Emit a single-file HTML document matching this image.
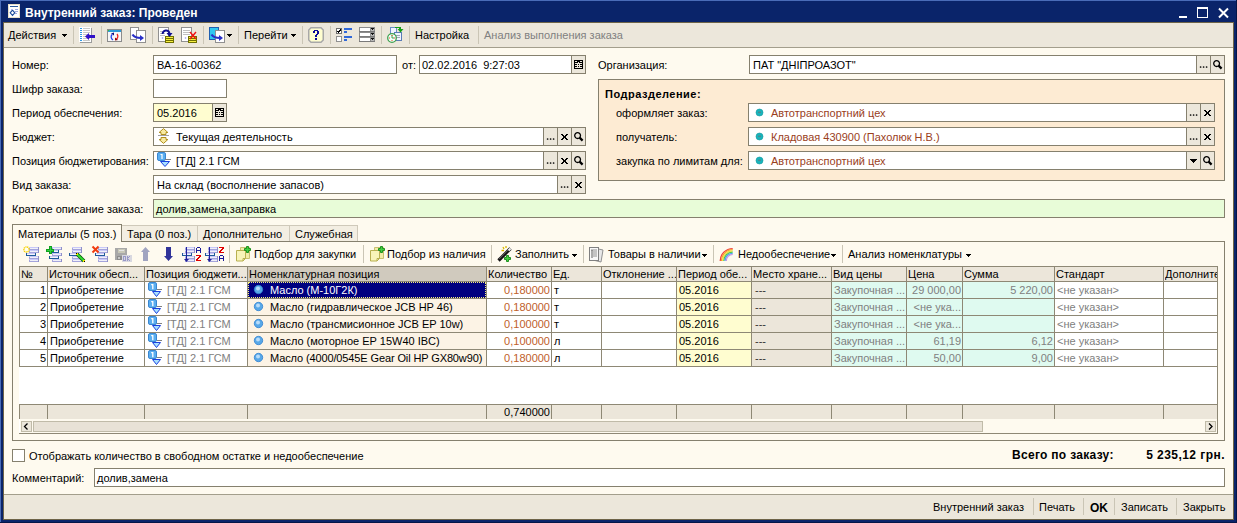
<!DOCTYPE html><html><head><meta charset="utf-8"><style>
html,body{margin:0;padding:0;width:1237px;height:523px;overflow:hidden;position:relative;background:#0A246A}
.a{position:absolute}
.t{position:absolute;font-family:"Liberation Sans",sans-serif;font-size:11px;line-height:13px;white-space:nowrap}
svg.a{overflow:visible}
</style></head><body>
<div class="a" style="left:0px;top:0px;width:1237px;height:523px;background:#0A246A;"></div>
<div class="a" style="left:0px;top:0px;width:1237px;height:1px;background:#4A6CB8;"></div>
<div class="a" style="left:0px;top:0px;width:1px;height:523px;background:#4A6CB8;"></div>
<svg class="a" style="left:8px;top:4px" width="12" height="14" viewBox="0 0 12 14"><rect x="0" y="0" width="12" height="14" fill="#E8E0C8"/><rect x="1" y="1" width="10" height="12" fill="#FFFFFF"/><rect x="2" y="2" width="8" height="1" fill="#2A5A9A"/><path d="M4.5 6.2L6.8 8.8 4.5 11.4 2.2 8.8z" fill="none" stroke="#1A4A9A" stroke-width="1.1"/><rect x="7" y="5" width="3" height="1" fill="#9AA8E0"/><rect x="7" y="7" width="3" height="1" fill="#9AA8E0"/><rect x="7" y="9" width="2" height="1" fill="#9AA8E0"/><rect x="3" y="5" width="2" height="1" fill="#B0B8F0"/></svg>
<div class="t" style="left:25px;top:7px;color:#fff;font-weight:bold;font-size:12px;">Внутренний заказ: Проведен</div>
<div class="a" style="left:1179px;top:16px;width:8px;height:2px;background:#fff;"></div>
<div class="a" style="left:1197px;top:7px;width:11px;height:11px;border:1px solid #fff;box-sizing:border-box;border-top-width:2px;"></div>
<svg class="a" style="left:1218px;top:8px" width="11" height="10" viewBox="0 0 11 10"><path d="M1 0.5L10 9.5M10 0.5L1 9.5" stroke="#fff" stroke-width="2"/></svg>
<div class="a" style="left:3px;top:22px;width:1231px;height:1px;background:#6E6448;"></div>
<div class="a" style="left:3px;top:22px;width:1px;height:498px;background:#6E6448;"></div>
<div class="a" style="left:1233px;top:22px;width:1px;height:498px;background:#6E6448;"></div>
<div class="a" style="left:4px;top:23px;width:1229px;height:24px;background:#ECE7DB;"></div>
<div class="a" style="left:4px;top:47px;width:1229px;height:1px;background:#A39E8C;"></div>
<div class="a" style="left:4px;top:48px;width:1229px;height:446px;background:#FEFAEF;"></div>
<div class="a" style="left:4px;top:494px;width:1229px;height:1px;background:#A39E8C;"></div>
<div class="a" style="left:4px;top:495px;width:1229px;height:24px;background:#ECE7DB;"></div>
<div class="a" style="left:3px;top:519px;width:1231px;height:1px;background:#6E6448;"></div>
<div class="a" style="left:1236px;top:0px;width:1px;height:523px;background:#051648;"></div>
<div class="a" style="left:0px;top:522px;width:1237px;height:1px;background:#051648;"></div>
<div class="t" style="left:8px;top:29px;color:#000;">Действия</div>
<svg class="a" style="left:62px;top:34px" width="5" height="3" viewBox="0 0 5 3" shape-rendering="crispEdges"><rect x="0" y="0" width="5" height="1" fill="#000"/><rect x="1" y="1" width="3" height="1" fill="#000"/><rect x="2" y="2" width="1" height="1" fill="#000"/></svg>
<div class="a" style="left:73px;top:26px;width:1px;height:18px;background:#CAC5B5;"></div>
<svg class="a" style="left:79px;top:27px" width="17" height="17" viewBox="0 0 17 17"><rect x="1" y="1" width="12" height="15" fill="#9C9C9C"/><rect x="0" y="0" width="12" height="15" fill="#FFFFFF"/><rect x="1" y="1" width="2" height="1" fill="#2D9AE8"/><rect x="4" y="1" width="7" height="1" fill="#C8C8C8"/><rect x="1" y="3" width="2" height="1" fill="#2D9AE8"/><rect x="4" y="3" width="7" height="1" fill="#C8C8C8"/><rect x="1" y="5" width="2" height="1" fill="#2D9AE8"/><rect x="4" y="5" width="7" height="1" fill="#C8C8C8"/><rect x="1" y="7" width="2" height="1" fill="#2D9AE8"/><rect x="4" y="7" width="7" height="1" fill="#C8C8C8"/><rect x="1" y="9" width="2" height="1" fill="#2D9AE8"/><rect x="4" y="9" width="7" height="1" fill="#C8C8C8"/><rect x="1" y="11" width="2" height="1" fill="#2D9AE8"/><rect x="4" y="11" width="7" height="1" fill="#C8C8C8"/><rect x="1" y="13" width="2" height="1" fill="#2D9AE8"/><rect x="4" y="13" width="7" height="1" fill="#C8C8C8"/><path d="M6 9.5L10 6v2h6v3h-6v2z" fill="#3010C8"/></svg>
<div class="a" style="left:101px;top:26px;width:1px;height:18px;background:#CAC5B5;"></div>
<svg class="a" style="left:107px;top:29px" width="15" height="13" viewBox="0 0 15 13"><rect x="0" y="0" width="15" height="13" fill="#8C8C8C"/><rect x="1" y="1" width="13" height="11" fill="#F6F6F6"/><rect x="1" y="1" width="13" height="2" fill="#2D9AD8"/><rect x="1" y="1" width="1" height="1" fill="#30D030"/><path d="M5 5.5a3.6 3.6 0 0 0 1 5.5" stroke="#2040F0" stroke-width="1.3" fill="none"/><path d="M4 4.5l3-1v3z" fill="#101080"/><path d="M10 5a3.6 3.6 0 0 1 -1 5.5" stroke="#F02020" stroke-width="1.3" fill="none"/><path d="M11 11l-3 0.5v-3z" fill="#900000"/></svg>
<svg class="a" style="left:130px;top:27px" width="17" height="17" viewBox="0 0 17 17"><rect x="0" y="0" width="9" height="13" fill="#909090"/><rect x="1" y="1" width="7" height="11" fill="#fff"/><rect x="6" y="3" width="10" height="13" fill="#909090"/><rect x="7" y="4" width="8" height="11" fill="#fff"/><path d="M2.5 7.5C4 10 8 11 11 11" stroke="#2A30C8" stroke-width="2.2" fill="none"/><path d="M10 8l4 3-4 3z" fill="#2A30C8"/></svg>
<div class="a" style="left:152px;top:26px;width:1px;height:18px;background:#CAC5B5;"></div>
<svg class="a" style="left:158px;top:27px" width="17" height="17" viewBox="0 0 17 17"><rect x="0" y="0" width="11" height="15" fill="#909090"/><rect x="1" y="1" width="9" height="13" fill="#fff"/><rect x="2" y="4" width="5" height="1" fill="#C0C0C0"/><rect x="2" y="6" width="5" height="1" fill="#C0C0C0"/><rect x="2" y="8" width="5" height="1" fill="#C0C0C0"/><path d="M3.5 11l1-1 1 1-1 1z" fill="#A0A0F0"/><rect x="7" y="9" width="9" height="7" fill="#707000"/><rect x="8" y="10" width="7" height="1" fill="#F8F040"/><rect x="8" y="12" width="7" height="1" fill="#F8F040"/><rect x="8" y="14" width="7" height="1" fill="#F8F040"/><path d="M4.5 7C5 3 10 2 11.5 6" stroke="#101090" stroke-width="2" fill="none"/><path d="M8.5 6h6l-3 4z" fill="#101090"/></svg>
<svg class="a" style="left:181px;top:27px" width="17" height="17" viewBox="0 0 17 17"><rect x="0" y="0" width="11" height="15" fill="#909090"/><rect x="1" y="1" width="9" height="13" fill="#fff"/><rect x="2" y="3" width="7" height="1" fill="#C0C0C0"/><rect x="2" y="5" width="7" height="1" fill="#C0C0C0"/><rect x="2" y="7" width="7" height="1" fill="#C0C0C0"/><path d="M3.5 11l1-1 1 1-1 1z" fill="#A0A0F0"/><rect x="7" y="9" width="9" height="7" fill="#707000"/><rect x="8" y="10" width="7" height="1" fill="#F8F040"/><rect x="8" y="12" width="7" height="1" fill="#F8F040"/><rect x="8" y="14" width="7" height="1" fill="#F8F040"/><path d="M9 5l6 7M15 5l-6 7" stroke="#F01010" stroke-width="1.4"/></svg>
<div class="a" style="left:203px;top:26px;width:1px;height:18px;background:#CAC5B5;"></div>
<svg class="a" style="left:209px;top:27px" width="17" height="17" viewBox="0 0 17 17"><rect x="0" y="0" width="10" height="13" fill="#2060B0"/><rect x="1" y="1" width="8" height="11" fill="#30C8F0"/><rect x="6" y="3" width="10" height="13" fill="#909090"/><rect x="7" y="4" width="8" height="11" fill="#fff"/><path d="M2.5 7.5C4 10 8 11 11 11" stroke="#2A30C8" stroke-width="2.2" fill="none"/><path d="M10 8l4 3-4 3z" fill="#2A30C8"/></svg>
<svg class="a" style="left:227px;top:34px" width="5" height="3" viewBox="0 0 5 3" shape-rendering="crispEdges"><rect x="0" y="0" width="5" height="1" fill="#000"/><rect x="1" y="1" width="3" height="1" fill="#000"/><rect x="2" y="2" width="1" height="1" fill="#000"/></svg>
<div class="a" style="left:238px;top:26px;width:1px;height:18px;background:#CAC5B5;"></div>
<div class="t" style="left:244px;top:29px;color:#000;">Перейти</div>
<svg class="a" style="left:291px;top:34px" width="5" height="3" viewBox="0 0 5 3" shape-rendering="crispEdges"><rect x="0" y="0" width="5" height="1" fill="#000"/><rect x="1" y="1" width="3" height="1" fill="#000"/><rect x="2" y="2" width="1" height="1" fill="#000"/></svg>
<div class="a" style="left:302px;top:26px;width:1px;height:18px;background:#CAC5B5;"></div>
<svg class="a" style="left:308px;top:27px" width="16" height="16" viewBox="0 0 16 16"><path d="M3 0.75h10l2.25 2.25v10l-2.25 2.25h-10l-2.25-2.25v-10z" fill="#FFFED0" stroke="#A8A8A8" stroke-width="1.5"/><rect x="6" y="3" width="1" height="1" fill="#0A0A9A"/><rect x="7" y="3" width="1" height="1" fill="#0A0A9A"/><rect x="8" y="3" width="1" height="1" fill="#0A0A9A"/><rect x="9" y="3" width="1" height="1" fill="#0A0A9A"/><rect x="5" y="4" width="1" height="1" fill="#0A0A9A"/><rect x="6" y="4" width="1" height="1" fill="#0A0A9A"/><rect x="9" y="4" width="1" height="1" fill="#0A0A9A"/><rect x="10" y="4" width="1" height="1" fill="#0A0A9A"/><rect x="5" y="5" width="1" height="1" fill="#0A0A9A"/><rect x="6" y="5" width="1" height="1" fill="#0A0A9A"/><rect x="9" y="5" width="1" height="1" fill="#0A0A9A"/><rect x="10" y="5" width="1" height="1" fill="#0A0A9A"/><rect x="9" y="6" width="1" height="1" fill="#0A0A9A"/><rect x="10" y="6" width="1" height="1" fill="#0A0A9A"/><rect x="8" y="7" width="1" height="1" fill="#0A0A9A"/><rect x="9" y="7" width="1" height="1" fill="#0A0A9A"/><rect x="7" y="8" width="1" height="1" fill="#0A0A9A"/><rect x="8" y="8" width="1" height="1" fill="#0A0A9A"/><rect x="7" y="9" width="1" height="1" fill="#0A0A9A"/><rect x="8" y="9" width="1" height="1" fill="#0A0A9A"/><rect x="7" y="11" width="1" height="1" fill="#0A0A9A"/><rect x="8" y="11" width="1" height="1" fill="#0A0A9A"/><rect x="7" y="12" width="1" height="1" fill="#0A0A9A"/><rect x="8" y="12" width="1" height="1" fill="#0A0A9A"/></svg>
<div class="a" style="left:330px;top:26px;width:1px;height:18px;background:#CAC5B5;"></div>
<svg class="a" style="left:336px;top:28px" width="16" height="14" viewBox="0 0 16 14" shape-rendering="crispEdges"><rect x="0" y="0" width="6" height="6" fill="#707070"/><rect x="1" y="1" width="4" height="4" fill="#fff"/><path d="M1.5 3l1.3 1.5L4.5 1.5" stroke="#000" stroke-width="1.2" fill="none"/><rect x="0" y="8" width="6" height="6" fill="#909090"/><rect x="1" y="9" width="4" height="4" fill="#fff"/><rect x="8" y="0" width="8" height="2" fill="#3068D8"/><rect x="8" y="3" width="3" height="2" fill="#3068D8"/><rect x="8" y="8" width="8" height="2" fill="#3068D8"/><rect x="8" y="11" width="3" height="2" fill="#3068D8"/></svg>
<svg class="a" style="left:359px;top:27px" width="16" height="15" viewBox="0 0 16 15" shape-rendering="crispEdges"><rect x="0" y="0" width="16" height="5" fill="#8C8C8C"/><rect x="1" y="1" width="10" height="3" fill="#FFFFFF"/><rect x="12" y="1" width="3" height="3" fill="#B8B8B8"/><rect x="12" y="1" width="3" height="1" fill="#101010"/><rect x="13" y="2" width="1" height="1" fill="#101010"/><rect x="0" y="4" width="16" height="1" fill="#7A7A7A"/><rect x="0" y="5" width="16" height="5" fill="#8C8C8C"/><rect x="1" y="6" width="10" height="3" fill="#FFFFFF"/><rect x="12" y="6" width="3" height="3" fill="#B8B8B8"/><rect x="12" y="6" width="3" height="1" fill="#101010"/><rect x="13" y="7" width="1" height="1" fill="#101010"/><rect x="0" y="9" width="16" height="1" fill="#7A7A7A"/><rect x="0" y="10" width="16" height="5" fill="#8C8C8C"/><rect x="1" y="11" width="10" height="3" fill="#FFFFFF"/><rect x="12" y="11" width="3" height="3" fill="#B8B8B8"/><rect x="12" y="11" width="3" height="1" fill="#101010"/><rect x="13" y="12" width="1" height="1" fill="#101010"/><rect x="0" y="14" width="16" height="1" fill="#7A7A7A"/></svg>
<div class="a" style="left:381px;top:26px;width:1px;height:18px;background:#CAC5B5;"></div>
<svg class="a" style="left:387px;top:26px" width="17" height="17" viewBox="0 0 17 17"><rect x="3.5" y="1.5" width="6" height="8" fill="#F0F4FF" stroke="#6A8CC8"/><rect x="7.5" y="6.5" width="7" height="8" fill="#F0F4FF" stroke="#5A7CB8"/><rect x="9" y="9" width="4" height="1" fill="#A0A8B8"/><rect x="9" y="11" width="4" height="1" fill="#A0A8B8"/><rect x="8" y="1" width="5" height="1" fill="#18A018"/><path d="M10.5 3h6l-3 3.5z" fill="#18A018"/><rect x="12" y="1" width="2" height="3" fill="#18A018"/><circle cx="5" cy="12" r="4.3" fill="#F4FFFA" stroke="#40A050" stroke-width="1.3"/><path d="M5 9v3h2" stroke="#40A050" fill="none"/><rect x="4.5" y="9" width="1" height="1" fill="#F05020"/><rect x="2" y="11.5" width="1" height="1" fill="#F05020"/><rect x="7" y="11.5" width="1" height="1" fill="#F05020"/><rect x="4.5" y="14" width="1" height="1" fill="#F05020"/></svg>
<div class="a" style="left:409px;top:26px;width:1px;height:18px;background:#CAC5B5;"></div>
<div class="t" style="left:415px;top:29px;color:#000;">Настройка</div>
<div class="a" style="left:478px;top:26px;width:1px;height:18px;background:#CAC5B5;"></div>
<div class="t" style="left:484px;top:29px;color:#808080;">Анализ выполнения заказа</div>
<div class="t" style="left:12px;top:59px;color:#000;">Номер:</div>
<div class="t" style="left:12px;top:83px;color:#000;">Шифр заказа:</div>
<div class="t" style="left:12px;top:107px;color:#000;">Период обеспечения:</div>
<div class="t" style="left:12px;top:131px;color:#000;">Бюджет:</div>
<div class="t" style="left:12px;top:155px;color:#000;">Позиция бюджетирования:</div>
<div class="t" style="left:12px;top:179px;color:#000;">Вид заказа:</div>
<div class="t" style="left:12px;top:203px;color:#000;">Краткое описание заказа:</div>
<div class="a" style="left:153px;top:55px;width:244px;height:19px;background:#fff;border:1px solid #85806E;box-sizing:border-box;"></div>
<div class="t" style="left:157px;top:59px;color:#000;">ВА-16-00362</div>
<div class="t" style="left:402px;top:59px;color:#000;">от:</div>
<div class="a" style="left:419px;top:55px;width:167px;height:19px;background:#fff;border:1px solid #85806E;box-sizing:border-box;"></div>
<div class="t" style="left:422px;top:59px;color:#000;">02.02.2016&nbsp; 9:27:03</div>
<div class="a" style="left:571px;top:55px;width:15px;height:19px;background:#ECE7DB;border:1px solid #85806E;box-sizing:border-box;"></div>
<svg class="a" style="left:574px;top:60px" width="9" height="9" viewBox="0 0 9 9" shape-rendering="crispEdges"><rect x="0" y="0" width="9" height="1" fill="#000"/><rect x="0" y="1" width="1" height="1" fill="#000"/><rect x="3" y="1" width="3" height="1" fill="#000"/><rect x="8" y="1" width="1" height="1" fill="#000"/><rect x="0" y="2" width="4" height="1" fill="#000"/><rect x="5" y="2" width="4" height="1" fill="#000"/><rect x="0" y="3" width="1" height="1" fill="#000"/><rect x="8" y="3" width="1" height="1" fill="#000"/><rect x="0" y="4" width="3" height="1" fill="#000"/><rect x="4" y="4" width="1" height="1" fill="#000"/><rect x="6" y="4" width="3" height="1" fill="#000"/><rect x="0" y="5" width="1" height="1" fill="#000"/><rect x="8" y="5" width="1" height="1" fill="#000"/><rect x="0" y="6" width="3" height="1" fill="#000"/><rect x="4" y="6" width="1" height="1" fill="#000"/><rect x="6" y="6" width="3" height="1" fill="#000"/><rect x="0" y="7" width="1" height="1" fill="#000"/><rect x="8" y="7" width="1" height="1" fill="#000"/><rect x="0" y="8" width="9" height="1" fill="#000"/></svg>
<div class="a" style="left:153px;top:79px;width:74px;height:19px;background:#fff;border:1px solid #85806E;box-sizing:border-box;"></div>
<div class="a" style="left:153px;top:103px;width:74px;height:19px;background:#FFFDD0;border:1px solid #85806E;box-sizing:border-box;"></div>
<div class="t" style="left:157px;top:107px;color:#000;">05.2016</div>
<div class="a" style="left:212px;top:103px;width:15px;height:19px;background:#ECE7DB;border:1px solid #85806E;box-sizing:border-box;"></div>
<svg class="a" style="left:215px;top:108px" width="9" height="9" viewBox="0 0 9 9" shape-rendering="crispEdges"><rect x="0" y="0" width="9" height="1" fill="#000"/><rect x="0" y="1" width="1" height="1" fill="#000"/><rect x="3" y="1" width="3" height="1" fill="#000"/><rect x="8" y="1" width="1" height="1" fill="#000"/><rect x="0" y="2" width="4" height="1" fill="#000"/><rect x="5" y="2" width="4" height="1" fill="#000"/><rect x="0" y="3" width="1" height="1" fill="#000"/><rect x="8" y="3" width="1" height="1" fill="#000"/><rect x="0" y="4" width="3" height="1" fill="#000"/><rect x="4" y="4" width="1" height="1" fill="#000"/><rect x="6" y="4" width="3" height="1" fill="#000"/><rect x="0" y="5" width="1" height="1" fill="#000"/><rect x="8" y="5" width="1" height="1" fill="#000"/><rect x="0" y="6" width="3" height="1" fill="#000"/><rect x="4" y="6" width="1" height="1" fill="#000"/><rect x="6" y="6" width="3" height="1" fill="#000"/><rect x="0" y="7" width="1" height="1" fill="#000"/><rect x="8" y="7" width="1" height="1" fill="#000"/><rect x="0" y="8" width="9" height="1" fill="#000"/></svg>
<div class="a" style="left:153px;top:127px;width:433px;height:19px;background:#fff;border:1px solid #85806E;box-sizing:border-box;"></div>
<svg class="a" style="left:158px;top:128px" width="12" height="17" viewBox="0 0 12 17"><path d="M5.5 0.6L9.9 4.5H8V6.5H3V4.5H1.1Z" fill="#F8EAA0" stroke="#B09020" stroke-linejoin="bevel"/><path d="M5.5 15.4L9.9 11.5H8V9.5H3V11.5H1.1Z" fill="#F8EAA0" stroke="#B09020" stroke-linejoin="bevel"/><rect x="0" y="7" width="11" height="1" fill="#A0A0A0"/></svg>
<div class="t" style="left:176px;top:131px;color:#000;">Текущая деятельность</div>
<div class="a" style="left:543px;top:127px;width:15px;height:19px;background:#ECE7DB;border:1px solid #85806E;box-sizing:border-box;"></div>
<svg class="a" style="left:547px;top:138px" width="8" height="2" viewBox="0 0 8 2"><circle cx="0.6" cy="1" r="0.85" fill="#000"/><circle cx="3.6" cy="1" r="0.85" fill="#000"/><circle cx="6.6" cy="1" r="0.85" fill="#000"/></svg>
<div class="a" style="left:557px;top:127px;width:15px;height:19px;background:#ECE7DB;border:1px solid #85806E;box-sizing:border-box;"></div>
<svg class="a" style="left:561px;top:134px" width="7" height="6" viewBox="0 0 7 6" shape-rendering="crispEdges"><rect x="0" y="0" width="2" height="1" fill="#000"/><rect x="5" y="0" width="2" height="1" fill="#000"/><rect x="1" y="1" width="2" height="1" fill="#000"/><rect x="4" y="1" width="2" height="1" fill="#000"/><rect x="2" y="2" width="3" height="1" fill="#000"/><rect x="2" y="3" width="3" height="1" fill="#000"/><rect x="1" y="4" width="2" height="1" fill="#000"/><rect x="4" y="4" width="2" height="1" fill="#000"/><rect x="0" y="5" width="2" height="1" fill="#000"/><rect x="5" y="5" width="2" height="1" fill="#000"/></svg>
<div class="a" style="left:571px;top:127px;width:15px;height:19px;background:#ECE7DB;border:1px solid #85806E;box-sizing:border-box;"></div>
<svg class="a" style="left:574px;top:132px" width="10" height="10" viewBox="0 0 10 10"><circle cx="3.6" cy="3.6" r="2.9" fill="none" stroke="#000" stroke-width="1.3"/><path d="M5.6 5.6L8.6 8.6" stroke="#000" stroke-width="2.2"/></svg>
<div class="a" style="left:153px;top:151px;width:433px;height:19px;background:#fff;border:1px solid #85806E;box-sizing:border-box;"></div>
<svg class="a" style="left:157px;top:152px" width="14" height="16" viewBox="0 0 14 16"><rect x="0.5" y="0.5" width="8" height="8" rx="1.5" fill="#5AAEF0" stroke="#3A86D0"/><path d="M3.5 2.5h1.5v4.5" stroke="#fff" stroke-width="1.2" fill="none"/><rect x="8" y="7" width="6" height="1" fill="#808080"/><path d="M3.5 9.5h9l-4.5 5z" fill="#A8E0FF" stroke="#1A40E0"/></svg>
<div class="t" style="left:176px;top:155px;color:#000;">[ТД] 2.1 ГСМ</div>
<div class="a" style="left:543px;top:151px;width:15px;height:19px;background:#ECE7DB;border:1px solid #85806E;box-sizing:border-box;"></div>
<svg class="a" style="left:547px;top:162px" width="8" height="2" viewBox="0 0 8 2"><circle cx="0.6" cy="1" r="0.85" fill="#000"/><circle cx="3.6" cy="1" r="0.85" fill="#000"/><circle cx="6.6" cy="1" r="0.85" fill="#000"/></svg>
<div class="a" style="left:557px;top:151px;width:15px;height:19px;background:#ECE7DB;border:1px solid #85806E;box-sizing:border-box;"></div>
<svg class="a" style="left:561px;top:158px" width="7" height="6" viewBox="0 0 7 6" shape-rendering="crispEdges"><rect x="0" y="0" width="2" height="1" fill="#000"/><rect x="5" y="0" width="2" height="1" fill="#000"/><rect x="1" y="1" width="2" height="1" fill="#000"/><rect x="4" y="1" width="2" height="1" fill="#000"/><rect x="2" y="2" width="3" height="1" fill="#000"/><rect x="2" y="3" width="3" height="1" fill="#000"/><rect x="1" y="4" width="2" height="1" fill="#000"/><rect x="4" y="4" width="2" height="1" fill="#000"/><rect x="0" y="5" width="2" height="1" fill="#000"/><rect x="5" y="5" width="2" height="1" fill="#000"/></svg>
<div class="a" style="left:571px;top:151px;width:15px;height:19px;background:#ECE7DB;border:1px solid #85806E;box-sizing:border-box;"></div>
<svg class="a" style="left:574px;top:156px" width="10" height="10" viewBox="0 0 10 10"><circle cx="3.6" cy="3.6" r="2.9" fill="none" stroke="#000" stroke-width="1.3"/><path d="M5.6 5.6L8.6 8.6" stroke="#000" stroke-width="2.2"/></svg>
<div class="a" style="left:153px;top:175px;width:433px;height:19px;background:#fff;border:1px solid #85806E;box-sizing:border-box;"></div>
<div class="t" style="left:157px;top:179px;color:#000;">На склад (восполнение запасов)</div>
<div class="a" style="left:557px;top:175px;width:15px;height:19px;background:#ECE7DB;border:1px solid #85806E;box-sizing:border-box;"></div>
<svg class="a" style="left:561px;top:186px" width="8" height="2" viewBox="0 0 8 2"><circle cx="0.6" cy="1" r="0.85" fill="#000"/><circle cx="3.6" cy="1" r="0.85" fill="#000"/><circle cx="6.6" cy="1" r="0.85" fill="#000"/></svg>
<div class="a" style="left:571px;top:175px;width:15px;height:19px;background:#ECE7DB;border:1px solid #85806E;box-sizing:border-box;"></div>
<svg class="a" style="left:575px;top:182px" width="7" height="6" viewBox="0 0 7 6" shape-rendering="crispEdges"><rect x="0" y="0" width="2" height="1" fill="#000"/><rect x="5" y="0" width="2" height="1" fill="#000"/><rect x="1" y="1" width="2" height="1" fill="#000"/><rect x="4" y="1" width="2" height="1" fill="#000"/><rect x="2" y="2" width="3" height="1" fill="#000"/><rect x="2" y="3" width="3" height="1" fill="#000"/><rect x="1" y="4" width="2" height="1" fill="#000"/><rect x="4" y="4" width="2" height="1" fill="#000"/><rect x="0" y="5" width="2" height="1" fill="#000"/><rect x="5" y="5" width="2" height="1" fill="#000"/></svg>
<div class="a" style="left:153px;top:199px;width:1072px;height:19px;background:#E8FCD8;border:1px solid #85806E;box-sizing:border-box;"></div>
<div class="t" style="left:156px;top:203px;color:#000;">долив,замена,заправка</div>
<div class="t" style="left:598px;top:59px;color:#000;">Организация:</div>
<div class="a" style="left:749px;top:55px;width:476px;height:19px;background:#fff;border:1px solid #85806E;box-sizing:border-box;"></div>
<div class="t" style="left:753px;top:59px;color:#000;">ПАТ "ДНІПРОАЗОТ"</div>
<div class="a" style="left:1196px;top:55px;width:15px;height:19px;background:#ECE7DB;border:1px solid #85806E;box-sizing:border-box;"></div>
<svg class="a" style="left:1200px;top:66px" width="8" height="2" viewBox="0 0 8 2"><circle cx="0.6" cy="1" r="0.85" fill="#000"/><circle cx="3.6" cy="1" r="0.85" fill="#000"/><circle cx="6.6" cy="1" r="0.85" fill="#000"/></svg>
<div class="a" style="left:1210px;top:55px;width:15px;height:19px;background:#ECE7DB;border:1px solid #85806E;box-sizing:border-box;"></div>
<svg class="a" style="left:1213px;top:60px" width="10" height="10" viewBox="0 0 10 10"><circle cx="3.6" cy="3.6" r="2.9" fill="none" stroke="#000" stroke-width="1.3"/><path d="M5.6 5.6L8.6 8.6" stroke="#000" stroke-width="2.2"/></svg>
<div class="a" style="left:598px;top:79px;width:627px;height:102px;background:#FDEBD3;border:1px solid #85806E;box-sizing:border-box;"></div>
<div class="t" style="left:605px;top:88px;color:#000;font-weight:bold;letter-spacing:0.5px;">Подразделение:</div>
<div class="t" style="left:616px;top:107px;color:#000;">оформляет заказ:</div>
<div class="a" style="left:748px;top:103px;width:467px;height:19px;background:#fff;border:1px solid #85806E;box-sizing:border-box;"></div>
<svg class="a" style="left:755px;top:108px" width="9" height="9" viewBox="0 0 9 9"><circle cx="4.5" cy="4.5" r="3.5" fill="#18B4BC" stroke="#12979E" stroke-width="0.6"/><rect x="3" y="3.6" width="3" height="1.4" fill="#4A8A90"/></svg>
<div class="t" style="left:771px;top:107px;color:#9A401C;">Автотранспортний цех</div>
<div class="a" style="left:1186px;top:103px;width:15px;height:19px;background:#ECE7DB;border:1px solid #85806E;box-sizing:border-box;"></div>
<svg class="a" style="left:1190px;top:114px" width="8" height="2" viewBox="0 0 8 2"><circle cx="0.6" cy="1" r="0.85" fill="#000"/><circle cx="3.6" cy="1" r="0.85" fill="#000"/><circle cx="6.6" cy="1" r="0.85" fill="#000"/></svg>
<div class="a" style="left:1200px;top:103px;width:15px;height:19px;background:#ECE7DB;border:1px solid #85806E;box-sizing:border-box;"></div>
<svg class="a" style="left:1204px;top:110px" width="7" height="6" viewBox="0 0 7 6" shape-rendering="crispEdges"><rect x="0" y="0" width="2" height="1" fill="#000"/><rect x="5" y="0" width="2" height="1" fill="#000"/><rect x="1" y="1" width="2" height="1" fill="#000"/><rect x="4" y="1" width="2" height="1" fill="#000"/><rect x="2" y="2" width="3" height="1" fill="#000"/><rect x="2" y="3" width="3" height="1" fill="#000"/><rect x="1" y="4" width="2" height="1" fill="#000"/><rect x="4" y="4" width="2" height="1" fill="#000"/><rect x="0" y="5" width="2" height="1" fill="#000"/><rect x="5" y="5" width="2" height="1" fill="#000"/></svg>
<div class="t" style="left:616px;top:131px;color:#000;">получатель:</div>
<div class="a" style="left:748px;top:127px;width:467px;height:19px;background:#fff;border:1px solid #85806E;box-sizing:border-box;"></div>
<svg class="a" style="left:755px;top:132px" width="9" height="9" viewBox="0 0 9 9"><circle cx="4.5" cy="4.5" r="3.5" fill="#18B4BC" stroke="#12979E" stroke-width="0.6"/><rect x="3" y="3.6" width="3" height="1.4" fill="#4A8A90"/></svg>
<div class="t" style="left:771px;top:131px;color:#9A401C;">Кладовая 430900 (Пахолюк Н.В.)</div>
<div class="a" style="left:1186px;top:127px;width:15px;height:19px;background:#ECE7DB;border:1px solid #85806E;box-sizing:border-box;"></div>
<svg class="a" style="left:1190px;top:138px" width="8" height="2" viewBox="0 0 8 2"><circle cx="0.6" cy="1" r="0.85" fill="#000"/><circle cx="3.6" cy="1" r="0.85" fill="#000"/><circle cx="6.6" cy="1" r="0.85" fill="#000"/></svg>
<div class="a" style="left:1200px;top:127px;width:15px;height:19px;background:#ECE7DB;border:1px solid #85806E;box-sizing:border-box;"></div>
<svg class="a" style="left:1204px;top:134px" width="7" height="6" viewBox="0 0 7 6" shape-rendering="crispEdges"><rect x="0" y="0" width="2" height="1" fill="#000"/><rect x="5" y="0" width="2" height="1" fill="#000"/><rect x="1" y="1" width="2" height="1" fill="#000"/><rect x="4" y="1" width="2" height="1" fill="#000"/><rect x="2" y="2" width="3" height="1" fill="#000"/><rect x="2" y="3" width="3" height="1" fill="#000"/><rect x="1" y="4" width="2" height="1" fill="#000"/><rect x="4" y="4" width="2" height="1" fill="#000"/><rect x="0" y="5" width="2" height="1" fill="#000"/><rect x="5" y="5" width="2" height="1" fill="#000"/></svg>
<div class="t" style="left:616px;top:155px;color:#000;">закупка по лимитам для:</div>
<div class="a" style="left:748px;top:151px;width:467px;height:19px;background:#fff;border:1px solid #85806E;box-sizing:border-box;"></div>
<svg class="a" style="left:755px;top:156px" width="9" height="9" viewBox="0 0 9 9"><circle cx="4.5" cy="4.5" r="3.5" fill="#18B4BC" stroke="#12979E" stroke-width="0.6"/><rect x="3" y="3.6" width="3" height="1.4" fill="#4A8A90"/></svg>
<div class="t" style="left:771px;top:155px;color:#9A401C;">Автотранспортний цех</div>
<div class="a" style="left:1186px;top:151px;width:15px;height:19px;background:#ECE7DB;border:1px solid #85806E;box-sizing:border-box;"></div>
<svg class="a" style="left:1190px;top:159px" width="7" height="4" viewBox="0 0 7 4" shape-rendering="crispEdges"><rect x="0" y="0" width="7" height="1" fill="#000"/><rect x="1" y="1" width="5" height="1" fill="#000"/><rect x="2" y="2" width="3" height="1" fill="#000"/><rect x="3" y="3" width="1" height="1" fill="#000"/></svg>
<div class="a" style="left:1200px;top:151px;width:15px;height:19px;background:#ECE7DB;border:1px solid #85806E;box-sizing:border-box;"></div>
<svg class="a" style="left:1203px;top:156px" width="10" height="10" viewBox="0 0 10 10"><circle cx="3.6" cy="3.6" r="2.9" fill="none" stroke="#000" stroke-width="1.3"/><path d="M5.6 5.6L8.6 8.6" stroke="#000" stroke-width="2.2"/></svg>
<div class="a" style="left:12px;top:241px;width:1213px;height:200px;background:#FEFAEF;border:1px solid #85806E;box-sizing:border-box;"></div>
<div class="a" style="left:121px;top:225px;width:77px;height:17px;background:#F3EEE2;border:1px solid #CFC9BA;box-sizing:border-box;"></div>
<div class="t" style="left:127px;top:228px;color:#000;">Тара (0 поз.)</div>
<div class="a" style="left:197px;top:225px;width:93px;height:17px;background:#F3EEE2;border:1px solid #CFC9BA;box-sizing:border-box;"></div>
<div class="t" style="left:203px;top:228px;color:#000;">Дополнительно</div>
<div class="a" style="left:289px;top:225px;width:69px;height:17px;background:#F3EEE2;border:1px solid #CFC9BA;box-sizing:border-box;"></div>
<div class="t" style="left:295px;top:228px;color:#000;">Служебная</div>
<div class="a" style="left:121px;top:225px;width:1px;height:17px;background:#85806E;"></div>
<div class="a" style="left:12px;top:241px;width:1213px;height:1px;background:#85806E;"></div>
<div class="a" style="left:12px;top:224px;width:110px;height:18px;background:#FEFAEF;border:1px solid #85806E;box-sizing:border-box;border-bottom:none;"></div>
<div class="t" style="left:18px;top:228px;color:#000;">Материалы (5 поз.)</div>
<svg class="a" style="left:18px;top:244px" width="210" height="20" viewBox="0 0 210 20"><rect x="11" y="3" width="10" height="3" fill="#A4A4DC"/><rect x="11" y="3" width="10" height="1" fill="#C8C8F8"/><rect x="12" y="4" width="8" height="1" fill="#F0F0F8"/><rect x="20" y="3" width="1" height="3" fill="#9090C8"/><rect x="11" y="6" width="10" height="3" fill="#A4A4DC"/><rect x="11" y="6" width="10" height="1" fill="#C8C8F8"/><rect x="12" y="7" width="8" height="1" fill="#F0F0F8"/><rect x="20" y="6" width="1" height="3" fill="#9090C8"/><rect x="8" y="9" width="10" height="3" fill="#1E5A98"/><rect x="9" y="9" width="8" height="2" fill="#F4F4FC"/><rect x="9" y="9" width="8" height="1" fill="#C8C8F4"/><rect x="11" y="12" width="10" height="3" fill="#A4A4DC"/><rect x="11" y="12" width="10" height="1" fill="#C8C8F8"/><rect x="12" y="13" width="8" height="1" fill="#F0F0F8"/><rect x="20" y="12" width="1" height="3" fill="#9090C8"/><rect x="11" y="15" width="10" height="3" fill="#A4A4DC"/><rect x="11" y="15" width="10" height="1" fill="#C8C8F8"/><rect x="12" y="16" width="8" height="1" fill="#F0F0F8"/><rect x="20" y="15" width="1" height="3" fill="#9090C8"/><circle cx="8.5" cy="5.5" r="2.6" fill="#FFFFF0" stroke="#F8D000" stroke-width="1.5" stroke-dasharray="1.2 0.6"/><rect x="34" y="3" width="10" height="3" fill="#A4A4DC"/><rect x="34" y="3" width="10" height="1" fill="#C8C8F8"/><rect x="35" y="4" width="8" height="1" fill="#F0F0F8"/><rect x="43" y="3" width="1" height="3" fill="#9090C8"/><rect x="31" y="6" width="10" height="3" fill="#1E5A98"/><rect x="32" y="6" width="8" height="2" fill="#F4F4FC"/><rect x="32" y="6" width="8" height="1" fill="#C8C8F4"/><rect x="34" y="9" width="10" height="3" fill="#A4A4DC"/><rect x="34" y="9" width="10" height="1" fill="#C8C8F8"/><rect x="35" y="10" width="8" height="1" fill="#F0F0F8"/><rect x="43" y="9" width="1" height="3" fill="#9090C8"/><rect x="31" y="12" width="10" height="3" fill="#1E5A98"/><rect x="32" y="12" width="8" height="2" fill="#F4F4FC"/><rect x="32" y="12" width="8" height="1" fill="#C8C8F4"/><rect x="34" y="15" width="10" height="3" fill="#A4A4DC"/><rect x="34" y="15" width="10" height="1" fill="#C8C8F8"/><rect x="35" y="16" width="8" height="1" fill="#F0F0F8"/><rect x="43" y="15" width="1" height="3" fill="#9090C8"/><rect x="28" y="5" width="8" height="3" fill="#10A020"/><rect x="31" y="2" width="3" height="8" fill="#10A020"/><rect x="29" y="6" width="6" height="1" fill="#30D040"/><rect x="32" y="3" width="1" height="6" fill="#30D040"/><rect x="54" y="3" width="10" height="3" fill="#A4A4DC"/><rect x="54" y="3" width="10" height="1" fill="#C8C8F8"/><rect x="55" y="4" width="8" height="1" fill="#F0F0F8"/><rect x="63" y="3" width="1" height="3" fill="#9090C8"/><rect x="54" y="6" width="10" height="3" fill="#A4A4DC"/><rect x="54" y="6" width="10" height="1" fill="#C8C8F8"/><rect x="55" y="7" width="8" height="1" fill="#F0F0F8"/><rect x="63" y="6" width="1" height="3" fill="#9090C8"/><rect x="51" y="9" width="10" height="3" fill="#1E5A98"/><rect x="52" y="9" width="8" height="2" fill="#F4F4FC"/><rect x="52" y="9" width="8" height="1" fill="#C8C8F4"/><rect x="54" y="12" width="10" height="3" fill="#A4A4DC"/><rect x="54" y="12" width="10" height="1" fill="#C8C8F8"/><rect x="55" y="13" width="8" height="1" fill="#F0F0F8"/><rect x="63" y="12" width="1" height="3" fill="#9090C8"/><rect x="54" y="15" width="10" height="3" fill="#A4A4DC"/><rect x="54" y="15" width="10" height="1" fill="#C8C8F8"/><rect x="55" y="16" width="8" height="1" fill="#F0F0F8"/><rect x="63" y="15" width="1" height="3" fill="#9090C8"/><path d="M59 10L66 17" stroke="#106010" stroke-width="3.6"/><path d="M59.5 10.5L65.5 16.5" stroke="#30E030" stroke-width="1.8"/><rect x="58" y="9" width="2" height="2" fill="#F0E000"/><rect x="65" y="16" width="2" height="2" fill="#F0E000"/><rect x="58" y="9" width="1" height="1" fill="#000"/><rect x="66" y="17" width="1" height="1" fill="#000"/><rect x="80" y="3" width="10" height="3" fill="#A4A4DC"/><rect x="80" y="3" width="10" height="1" fill="#C8C8F8"/><rect x="81" y="4" width="8" height="1" fill="#F0F0F8"/><rect x="89" y="3" width="1" height="3" fill="#9090C8"/><rect x="80" y="6" width="10" height="3" fill="#A4A4DC"/><rect x="80" y="6" width="10" height="1" fill="#C8C8F8"/><rect x="81" y="7" width="8" height="1" fill="#F0F0F8"/><rect x="89" y="6" width="1" height="3" fill="#9090C8"/><rect x="77" y="9" width="10" height="3" fill="#1E5A98"/><rect x="78" y="9" width="8" height="2" fill="#F4F4FC"/><rect x="78" y="9" width="8" height="1" fill="#C8C8F4"/><rect x="80" y="12" width="10" height="3" fill="#A4A4DC"/><rect x="80" y="12" width="10" height="1" fill="#C8C8F8"/><rect x="81" y="13" width="8" height="1" fill="#F0F0F8"/><rect x="89" y="12" width="1" height="3" fill="#9090C8"/><rect x="80" y="15" width="10" height="3" fill="#A4A4DC"/><rect x="80" y="15" width="10" height="1" fill="#C8C8F8"/><rect x="81" y="16" width="8" height="1" fill="#F0F0F8"/><rect x="89" y="15" width="1" height="3" fill="#9090C8"/><path d="M74.5 2.5l6 6M80.5 2.5l-6 6" stroke="#F03C10" stroke-width="2"/><rect x="97" y="4" width="12" height="12" fill="#A8A8A8"/><rect x="100" y="5" width="7" height="4" fill="#C8C8B8"/><rect x="101" y="6" width="5" height="1" fill="#E4E4E4"/><rect x="99" y="12" width="6" height="4" fill="#8C8C8C"/><rect x="100" y="13" width="2" height="2" fill="#C8C8C8"/><rect x="104" y="11" width="10" height="7" fill="#D8D8E0"/><rect x="105" y="12" width="1" height="1" fill="#9898C8"/><rect x="109" y="12" width="1" height="1" fill="#9898C8"/><rect x="106" y="12" width="1" height="1" fill="#9898C8"/><rect x="107" y="12" width="1" height="1" fill="#9898C8"/><rect x="111" y="12" width="1" height="1" fill="#9898C8"/><rect x="105" y="13" width="1" height="1" fill="#9898C8"/><rect x="109" y="13" width="1" height="1" fill="#9898C8"/><rect x="110" y="13" width="1" height="1" fill="#9898C8"/><rect x="107" y="13" width="1" height="1" fill="#9898C8"/><rect x="105" y="14" width="1" height="1" fill="#9898C8"/><rect x="109" y="14" width="1" height="1" fill="#9898C8"/><rect x="107" y="14" width="1" height="1" fill="#9898C8"/><rect x="105" y="15" width="1" height="1" fill="#9898C8"/><rect x="109" y="15" width="1" height="1" fill="#9898C8"/><rect x="110" y="15" width="1" height="1" fill="#9898C8"/><rect x="107" y="15" width="1" height="1" fill="#9898C8"/><rect x="105" y="16" width="1" height="1" fill="#9898C8"/><rect x="109" y="16" width="1" height="1" fill="#9898C8"/><rect x="106" y="16" width="1" height="1" fill="#9898C8"/><rect x="107" y="16" width="1" height="1" fill="#9898C8"/><rect x="111" y="16" width="1" height="1" fill="#9898C8"/><path d="M127.5 3L132 8H130V17H125V8H123Z" fill="#A0A4C0"/><path d="M150.5 17L155 12H153V3H148V12H146Z" fill="#30339A"/><rect x="167" y="3" width="10" height="3" fill="#A4A4DC"/><rect x="167" y="3" width="10" height="1" fill="#C8C8F8"/><rect x="168" y="4" width="8" height="1" fill="#F0F0F8"/><rect x="176" y="3" width="1" height="3" fill="#9090C8"/><rect x="167" y="6" width="10" height="3" fill="#A4A4DC"/><rect x="167" y="6" width="10" height="1" fill="#C8C8F8"/><rect x="168" y="7" width="8" height="1" fill="#F0F0F8"/><rect x="176" y="6" width="1" height="3" fill="#9090C8"/><rect x="164" y="9" width="10" height="3" fill="#1E5A98"/><rect x="165" y="9" width="8" height="2" fill="#F4F4FC"/><rect x="165" y="9" width="8" height="1" fill="#C8C8F4"/><rect x="167" y="12" width="10" height="3" fill="#A4A4DC"/><rect x="167" y="12" width="10" height="1" fill="#C8C8F8"/><rect x="168" y="13" width="8" height="1" fill="#F0F0F8"/><rect x="176" y="12" width="1" height="3" fill="#9090C8"/><rect x="167" y="15" width="10" height="3" fill="#A4A4DC"/><rect x="167" y="15" width="10" height="1" fill="#C8C8F8"/><rect x="168" y="16" width="8" height="1" fill="#F0F0F8"/><rect x="176" y="15" width="1" height="3" fill="#9090C8"/><rect x="168" y="3" width="1" height="14" fill="#20209A"/><path d="M166 15l2.5 3 2.5-3z" fill="#20209A"/><rect x="179" y="3" width="1" height="1" fill="#1A1A9A"/><rect x="180" y="3" width="1" height="1" fill="#1A1A9A"/><rect x="181" y="3" width="1" height="1" fill="#1A1A9A"/><rect x="178" y="4" width="1" height="1" fill="#1A1A9A"/><rect x="182" y="4" width="1" height="1" fill="#1A1A9A"/><rect x="178" y="5" width="1" height="1" fill="#1A1A9A"/><rect x="182" y="5" width="1" height="1" fill="#1A1A9A"/><rect x="178" y="6" width="1" height="1" fill="#1A1A9A"/><rect x="179" y="6" width="1" height="1" fill="#1A1A9A"/><rect x="180" y="6" width="1" height="1" fill="#1A1A9A"/><rect x="181" y="6" width="1" height="1" fill="#1A1A9A"/><rect x="182" y="6" width="1" height="1" fill="#1A1A9A"/><rect x="178" y="7" width="1" height="1" fill="#1A1A9A"/><rect x="182" y="7" width="1" height="1" fill="#1A1A9A"/><rect x="178" y="8" width="1" height="1" fill="#1A1A9A"/><rect x="182" y="8" width="1" height="1" fill="#1A1A9A"/><rect x="178" y="11" width="1" height="1" fill="#E00000"/><rect x="179" y="11" width="1" height="1" fill="#E00000"/><rect x="180" y="11" width="1" height="1" fill="#E00000"/><rect x="181" y="11" width="1" height="1" fill="#E00000"/><rect x="182" y="11" width="1" height="1" fill="#E00000"/><rect x="181" y="12" width="1" height="1" fill="#E00000"/><rect x="182" y="12" width="1" height="1" fill="#E00000"/><rect x="180" y="13" width="1" height="1" fill="#E00000"/><rect x="181" y="13" width="1" height="1" fill="#E00000"/><rect x="179" y="14" width="1" height="1" fill="#E00000"/><rect x="180" y="14" width="1" height="1" fill="#E00000"/><rect x="178" y="15" width="1" height="1" fill="#E00000"/><rect x="179" y="15" width="1" height="1" fill="#E00000"/><rect x="178" y="16" width="1" height="1" fill="#E00000"/><rect x="179" y="16" width="1" height="1" fill="#E00000"/><rect x="180" y="16" width="1" height="1" fill="#E00000"/><rect x="181" y="16" width="1" height="1" fill="#E00000"/><rect x="182" y="16" width="1" height="1" fill="#E00000"/><rect x="190" y="3" width="10" height="3" fill="#A4A4DC"/><rect x="190" y="3" width="10" height="1" fill="#C8C8F8"/><rect x="191" y="4" width="8" height="1" fill="#F0F0F8"/><rect x="199" y="3" width="1" height="3" fill="#9090C8"/><rect x="190" y="6" width="10" height="3" fill="#A4A4DC"/><rect x="190" y="6" width="10" height="1" fill="#C8C8F8"/><rect x="191" y="7" width="8" height="1" fill="#F0F0F8"/><rect x="199" y="6" width="1" height="3" fill="#9090C8"/><rect x="187" y="9" width="10" height="3" fill="#1E5A98"/><rect x="188" y="9" width="8" height="2" fill="#F4F4FC"/><rect x="188" y="9" width="8" height="1" fill="#C8C8F4"/><rect x="190" y="12" width="10" height="3" fill="#A4A4DC"/><rect x="190" y="12" width="10" height="1" fill="#C8C8F8"/><rect x="191" y="13" width="8" height="1" fill="#F0F0F8"/><rect x="199" y="12" width="1" height="3" fill="#9090C8"/><rect x="190" y="15" width="10" height="3" fill="#A4A4DC"/><rect x="190" y="15" width="10" height="1" fill="#C8C8F8"/><rect x="191" y="16" width="8" height="1" fill="#F0F0F8"/><rect x="199" y="15" width="1" height="3" fill="#9090C8"/><rect x="191" y="3" width="1" height="14" fill="#20209A"/><path d="M189 15l2.5 3 2.5-3z" fill="#20209A"/><rect x="201" y="3" width="1" height="1" fill="#E00000"/><rect x="202" y="3" width="1" height="1" fill="#E00000"/><rect x="203" y="3" width="1" height="1" fill="#E00000"/><rect x="204" y="3" width="1" height="1" fill="#E00000"/><rect x="205" y="3" width="1" height="1" fill="#E00000"/><rect x="204" y="4" width="1" height="1" fill="#E00000"/><rect x="205" y="4" width="1" height="1" fill="#E00000"/><rect x="203" y="5" width="1" height="1" fill="#E00000"/><rect x="204" y="5" width="1" height="1" fill="#E00000"/><rect x="202" y="6" width="1" height="1" fill="#E00000"/><rect x="203" y="6" width="1" height="1" fill="#E00000"/><rect x="201" y="7" width="1" height="1" fill="#E00000"/><rect x="202" y="7" width="1" height="1" fill="#E00000"/><rect x="201" y="8" width="1" height="1" fill="#E00000"/><rect x="202" y="8" width="1" height="1" fill="#E00000"/><rect x="203" y="8" width="1" height="1" fill="#E00000"/><rect x="204" y="8" width="1" height="1" fill="#E00000"/><rect x="205" y="8" width="1" height="1" fill="#E00000"/><rect x="202" y="11" width="1" height="1" fill="#1A1A9A"/><rect x="203" y="11" width="1" height="1" fill="#1A1A9A"/><rect x="204" y="11" width="1" height="1" fill="#1A1A9A"/><rect x="201" y="12" width="1" height="1" fill="#1A1A9A"/><rect x="205" y="12" width="1" height="1" fill="#1A1A9A"/><rect x="201" y="13" width="1" height="1" fill="#1A1A9A"/><rect x="205" y="13" width="1" height="1" fill="#1A1A9A"/><rect x="201" y="14" width="1" height="1" fill="#1A1A9A"/><rect x="202" y="14" width="1" height="1" fill="#1A1A9A"/><rect x="203" y="14" width="1" height="1" fill="#1A1A9A"/><rect x="204" y="14" width="1" height="1" fill="#1A1A9A"/><rect x="205" y="14" width="1" height="1" fill="#1A1A9A"/><rect x="201" y="15" width="1" height="1" fill="#1A1A9A"/><rect x="205" y="15" width="1" height="1" fill="#1A1A9A"/><rect x="201" y="16" width="1" height="1" fill="#1A1A9A"/><rect x="205" y="16" width="1" height="1" fill="#1A1A9A"/></svg>
<div class="a" style="left:229px;top:245px;width:1px;height:18px;background:#CAC5B5;"></div>
<svg class="a" style="left:236px;top:246px" width="16" height="16" viewBox="0 0 16 16"><path d="M4.5 1.5h9v11h-9z" fill="#F2ECA8" stroke="#C8C070"/><path d="M0.5 4.5h9v8l-2.5 2.5h-6.5z" fill="#F8F4B8" stroke="#B8B050"/><path d="M9.5 12.5h-2.5v2.5" fill="none" stroke="#B8B050"/><path d="M10.5 0.5h2v2h2v2h-2v2h-2v-2h-2v-2h2z" fill="#40D040" stroke="#209020"/></svg>
<div class="t" style="left:254px;top:248px;color:#000;">Подбор для закупки</div>
<div class="a" style="left:363px;top:245px;width:1px;height:18px;background:#CAC5B5;"></div>
<svg class="a" style="left:370px;top:246px" width="16" height="16" viewBox="0 0 16 16"><path d="M4.5 1.5h9v11h-9z" fill="#F2ECA8" stroke="#C8C070"/><path d="M0.5 4.5h9v8l-2.5 2.5h-6.5z" fill="#F8F4B8" stroke="#B8B050"/><path d="M9.5 12.5h-2.5v2.5" fill="none" stroke="#B8B050"/><path d="M10.5 0.5h2v2h2v2h-2v2h-2v-2h-2v-2h2z" fill="#40D040" stroke="#209020"/></svg>
<div class="t" style="left:387px;top:248px;color:#000;">Подбор из наличия</div>
<div class="a" style="left:491px;top:245px;width:1px;height:18px;background:#CAC5B5;"></div>
<svg class="a" style="left:497px;top:246px" width="17" height="17" viewBox="0 0 17 17"><path d="M1.5 14.5L13.5 2.5" stroke="#101010" stroke-width="3.2"/><path d="M2 13.2L12.8 2.4" stroke="#808080" stroke-width="0.8"/><path d="M11.5 4.5L13.5 2.5" stroke="#F0F0F0" stroke-width="2.2"/><path d="M6 1l1 2M4.5 4.5h2.5M9 0v2" stroke="#D8B800" stroke-width="1.3"/><path d="M9.5 9.5h2v2h2v2h-2v2h-2v-2h-2v-2h2z" fill="#40D040" stroke="#209020"/></svg>
<div class="t" style="left:515px;top:248px;color:#000;">Заполнить</div>
<svg class="a" style="left:572px;top:254px" width="5" height="3" viewBox="0 0 5 3" shape-rendering="crispEdges"><rect x="0" y="0" width="5" height="1" fill="#000"/><rect x="1" y="1" width="3" height="1" fill="#000"/><rect x="2" y="2" width="1" height="1" fill="#000"/></svg>
<div class="a" style="left:583px;top:245px;width:1px;height:18px;background:#CAC5B5;"></div>
<svg class="a" style="left:588px;top:246px" width="17" height="17" viewBox="0 0 17 17"><path d="M6 2l9 2-2 12-8-2z" fill="#E8E8E8" stroke="#909090"/><rect x="1.5" y="1.5" width="9" height="13" fill="#F8F8F8" stroke="#808080"/><path d="M3 4h6M5 6h4M5 8h4M5 10h4" stroke="#909090"/><path d="M4 4v8" stroke="#606060"/></svg>
<div class="t" style="left:608px;top:248px;color:#000;">Товары в наличии</div>
<svg class="a" style="left:702px;top:254px" width="5" height="3" viewBox="0 0 5 3" shape-rendering="crispEdges"><rect x="0" y="0" width="5" height="1" fill="#000"/><rect x="1" y="1" width="3" height="1" fill="#000"/><rect x="2" y="2" width="1" height="1" fill="#000"/></svg>
<div class="a" style="left:713px;top:245px;width:1px;height:18px;background:#CAC5B5;"></div>
<svg class="a" style="left:719px;top:246px" width="16" height="17" viewBox="0 0 16 17"><path d="M1.2 15 A12.5 12.5 0 0 1 13.7 2.5" stroke="#F04040" stroke-width="1.25" fill="none"/><path d="M2.4 15 A11.3 11.3 0 0 1 13.7 3.7" stroke="#F8A030" stroke-width="1.25" fill="none"/><path d="M3.5999999999999996 15 A10.1 10.1 0 0 1 13.7 4.9" stroke="#F0E040" stroke-width="1.25" fill="none"/><path d="M4.8 15 A8.9 8.9 0 0 1 13.7 6.1" stroke="#50C850" stroke-width="1.25" fill="none"/><path d="M6.0 15 A7.7 7.7 0 0 1 13.7 7.3" stroke="#50A8F0" stroke-width="1.25" fill="none"/><path d="M7.2 15 A6.5 6.5 0 0 1 13.7 8.5" stroke="#C890E8" stroke-width="1.25" fill="none"/></svg>
<div class="t" style="left:738px;top:248px;color:#000;">Недообеспечение</div>
<svg class="a" style="left:831px;top:254px" width="5" height="3" viewBox="0 0 5 3" shape-rendering="crispEdges"><rect x="0" y="0" width="5" height="1" fill="#000"/><rect x="1" y="1" width="3" height="1" fill="#000"/><rect x="2" y="2" width="1" height="1" fill="#000"/></svg>
<div class="a" style="left:842px;top:245px;width:1px;height:18px;background:#CAC5B5;"></div>
<div class="t" style="left:848px;top:248px;color:#000;">Анализ номенклатуры</div>
<svg class="a" style="left:966px;top:254px" width="5" height="3" viewBox="0 0 5 3" shape-rendering="crispEdges"><rect x="0" y="0" width="5" height="1" fill="#000"/><rect x="1" y="1" width="3" height="1" fill="#000"/><rect x="2" y="2" width="1" height="1" fill="#000"/></svg>
<div class="a" style="left:19px;top:266px;width:1199px;height:167px;background:#fff;"></div>
<div class="a" style="left:19px;top:266px;width:1199px;height:15px;background:#ECE6DA;"></div>
<div class="a" style="left:248px;top:267px;width:238px;height:14px;background:#D0CABE;"></div>
<div class="t" style="left:21px;top:268px;width:26px;overflow:hidden;">№</div>
<div class="t" style="left:49px;top:268px;width:95px;overflow:hidden;">Источник обесп...</div>
<div class="t" style="left:146px;top:268px;width:101px;overflow:hidden;">Позиция бюджети...</div>
<div class="t" style="left:249px;top:268px;width:237px;overflow:hidden;">Номенклатурная позиция</div>
<div class="t" style="left:488px;top:268px;width:63px;overflow:hidden;">Количество</div>
<div class="t" style="left:553px;top:268px;width:48px;overflow:hidden;">Ед.</div>
<div class="t" style="left:603px;top:268px;width:73px;overflow:hidden;">Отклонение ...</div>
<div class="t" style="left:678px;top:268px;width:73px;overflow:hidden;">Период обе...</div>
<div class="t" style="left:753px;top:268px;width:78px;overflow:hidden;">Место хране...</div>
<div class="t" style="left:833px;top:268px;width:73px;overflow:hidden;">Вид цены</div>
<div class="t" style="left:908px;top:268px;width:54px;overflow:hidden;">Цена</div>
<div class="t" style="left:964px;top:268px;width:90px;overflow:hidden;">Сумма</div>
<div class="t" style="left:1056px;top:268px;width:107px;overflow:hidden;">Стандарт</div>
<div class="t" style="left:1165px;top:268px;width:52px;overflow:hidden;">Дополните</div>
<div class="a" style="left:248px;top:282px;width:238px;height:16px;background:#FCF3E5;"></div>
<div class="a" style="left:677px;top:282px;width:74px;height:16px;background:#FFFDD0;"></div>
<div class="a" style="left:752px;top:282px;width:79px;height:16px;background:#ECE6DA;"></div>
<div class="a" style="left:832px;top:282px;width:74px;height:16px;background:#DFFAF0;"></div>
<div class="a" style="left:907px;top:282px;width:55px;height:16px;background:#DFFAF0;"></div>
<div class="a" style="left:963px;top:282px;width:91px;height:16px;background:#DFFAF0;"></div>
<div class="a" style="left:248px;top:282px;width:238px;height:16px;background:#000080;"></div>
<div class="a" style="left:248px;top:282px;width:238px;height:16px;box-sizing:border-box;border:1px dotted #F8F080;"></div>
<div class="t" style="right:1191px;top:284px;color:#000;">1</div>
<div class="t" style="left:50px;top:284px;color:#000;">Приобретение</div>
<div class="t" style="left:167px;top:284px;color:#808080;">[ТД] 2.1 ГСМ</div>
<svg class="a" style="left:254px;top:285px" width="9" height="9" viewBox="0 0 9 9"><circle cx="4.5" cy="4.5" r="4.2" fill="#58A8E8" stroke="#3080D0" stroke-width="0.8"/><circle cx="4" cy="3.6" r="2" fill="#B8DCFA"/></svg>
<div class="t" style="left:270px;top:284px;color:#fff;">Масло (М-10Г2К)</div>
<div class="t" style="right:687px;top:284px;color:#C0602A;">0,180000</div>
<div class="t" style="left:554px;top:284px;color:#000;">т</div>
<div class="t" style="left:679px;top:284px;color:#000;">05.2016</div>
<div class="t" style="left:755px;top:284px;color:#333;">---</div>
<div class="t" style="left:834px;top:284px;color:#808080;">Закупочная ...</div>
<div class="t" style="right:276px;top:284px;color:#808080;">29 000,00</div>
<div class="t" style="right:184px;top:284px;color:#808080;">5 220,00</div>
<div class="t" style="left:1057px;top:284px;color:#808080;">&lt;не указан&gt;</div>
<div class="a" style="left:248px;top:299px;width:238px;height:16px;background:#FCF3E5;"></div>
<div class="a" style="left:677px;top:299px;width:74px;height:16px;background:#FFFDD0;"></div>
<div class="a" style="left:752px;top:299px;width:79px;height:16px;background:#ECE6DA;"></div>
<div class="a" style="left:832px;top:299px;width:74px;height:16px;background:#DFFAF0;"></div>
<div class="a" style="left:907px;top:299px;width:55px;height:16px;background:#DFFAF0;"></div>
<div class="a" style="left:963px;top:299px;width:91px;height:16px;background:#DFFAF0;"></div>
<div class="t" style="right:1191px;top:301px;color:#000;">2</div>
<div class="t" style="left:50px;top:301px;color:#000;">Приобретение</div>
<div class="t" style="left:167px;top:301px;color:#808080;">[ТД] 2.1 ГСМ</div>
<svg class="a" style="left:254px;top:302px" width="9" height="9" viewBox="0 0 9 9"><circle cx="4.5" cy="4.5" r="4.2" fill="#58A8E8" stroke="#3080D0" stroke-width="0.8"/><circle cx="4" cy="3.6" r="2" fill="#B8DCFA"/></svg>
<div class="t" style="left:270px;top:301px;color:#000;">Масло (гидравлическое JCB HP 46)</div>
<div class="t" style="right:687px;top:301px;color:#C0602A;">0,180000</div>
<div class="t" style="left:554px;top:301px;color:#000;">т</div>
<div class="t" style="left:679px;top:301px;color:#000;">05.2016</div>
<div class="t" style="left:755px;top:301px;color:#333;">---</div>
<div class="t" style="left:834px;top:301px;color:#808080;">Закупочная ...</div>
<div class="t" style="right:276px;top:301px;color:#808080;">&lt;не ука...</div>
<div class="t" style="right:184px;top:301px;color:#808080;"></div>
<div class="t" style="left:1057px;top:301px;color:#808080;">&lt;не указан&gt;</div>
<div class="a" style="left:248px;top:316px;width:238px;height:16px;background:#FCF3E5;"></div>
<div class="a" style="left:677px;top:316px;width:74px;height:16px;background:#FFFDD0;"></div>
<div class="a" style="left:752px;top:316px;width:79px;height:16px;background:#ECE6DA;"></div>
<div class="a" style="left:832px;top:316px;width:74px;height:16px;background:#DFFAF0;"></div>
<div class="a" style="left:907px;top:316px;width:55px;height:16px;background:#DFFAF0;"></div>
<div class="a" style="left:963px;top:316px;width:91px;height:16px;background:#DFFAF0;"></div>
<div class="t" style="right:1191px;top:318px;color:#000;">3</div>
<div class="t" style="left:50px;top:318px;color:#000;">Приобретение</div>
<div class="t" style="left:167px;top:318px;color:#808080;">[ТД] 2.1 ГСМ</div>
<svg class="a" style="left:254px;top:319px" width="9" height="9" viewBox="0 0 9 9"><circle cx="4.5" cy="4.5" r="4.2" fill="#58A8E8" stroke="#3080D0" stroke-width="0.8"/><circle cx="4" cy="3.6" r="2" fill="#B8DCFA"/></svg>
<div class="t" style="left:270px;top:318px;color:#000;">Масло (трансмисионное JCB EP 10w)</div>
<div class="t" style="right:687px;top:318px;color:#C0602A;">0,100000</div>
<div class="t" style="left:554px;top:318px;color:#000;">т</div>
<div class="t" style="left:679px;top:318px;color:#000;">05.2016</div>
<div class="t" style="left:755px;top:318px;color:#333;">---</div>
<div class="t" style="left:834px;top:318px;color:#808080;">Закупочная ...</div>
<div class="t" style="right:276px;top:318px;color:#808080;">&lt;не ука...</div>
<div class="t" style="right:184px;top:318px;color:#808080;"></div>
<div class="t" style="left:1057px;top:318px;color:#808080;">&lt;не указан&gt;</div>
<div class="a" style="left:248px;top:333px;width:238px;height:16px;background:#FCF3E5;"></div>
<div class="a" style="left:677px;top:333px;width:74px;height:16px;background:#FFFDD0;"></div>
<div class="a" style="left:752px;top:333px;width:79px;height:16px;background:#ECE6DA;"></div>
<div class="a" style="left:832px;top:333px;width:74px;height:16px;background:#DFFAF0;"></div>
<div class="a" style="left:907px;top:333px;width:55px;height:16px;background:#DFFAF0;"></div>
<div class="a" style="left:963px;top:333px;width:91px;height:16px;background:#DFFAF0;"></div>
<div class="t" style="right:1191px;top:335px;color:#000;">4</div>
<div class="t" style="left:50px;top:335px;color:#000;">Приобретение</div>
<div class="t" style="left:167px;top:335px;color:#808080;">[ТД] 2.1 ГСМ</div>
<svg class="a" style="left:254px;top:336px" width="9" height="9" viewBox="0 0 9 9"><circle cx="4.5" cy="4.5" r="4.2" fill="#58A8E8" stroke="#3080D0" stroke-width="0.8"/><circle cx="4" cy="3.6" r="2" fill="#B8DCFA"/></svg>
<div class="t" style="left:270px;top:335px;color:#000;">Масло (моторное EP 15W40 IBC)</div>
<div class="t" style="right:687px;top:335px;color:#C0602A;">0,100000</div>
<div class="t" style="left:554px;top:335px;color:#000;">л</div>
<div class="t" style="left:679px;top:335px;color:#000;">05.2016</div>
<div class="t" style="left:755px;top:335px;color:#333;">---</div>
<div class="t" style="left:834px;top:335px;color:#808080;">Закупочная ...</div>
<div class="t" style="right:276px;top:335px;color:#808080;">61,19</div>
<div class="t" style="right:184px;top:335px;color:#808080;">6,12</div>
<div class="t" style="left:1057px;top:335px;color:#808080;">&lt;не указан&gt;</div>
<div class="a" style="left:248px;top:350px;width:238px;height:16px;background:#FCF3E5;"></div>
<div class="a" style="left:677px;top:350px;width:74px;height:16px;background:#FFFDD0;"></div>
<div class="a" style="left:752px;top:350px;width:79px;height:16px;background:#ECE6DA;"></div>
<div class="a" style="left:832px;top:350px;width:74px;height:16px;background:#DFFAF0;"></div>
<div class="a" style="left:907px;top:350px;width:55px;height:16px;background:#DFFAF0;"></div>
<div class="a" style="left:963px;top:350px;width:91px;height:16px;background:#DFFAF0;"></div>
<div class="t" style="right:1191px;top:352px;color:#000;">5</div>
<div class="t" style="left:50px;top:352px;color:#000;">Приобретение</div>
<div class="t" style="left:167px;top:352px;color:#808080;">[ТД] 2.1 ГСМ</div>
<svg class="a" style="left:254px;top:353px" width="9" height="9" viewBox="0 0 9 9"><circle cx="4.5" cy="4.5" r="4.2" fill="#58A8E8" stroke="#3080D0" stroke-width="0.8"/><circle cx="4" cy="3.6" r="2" fill="#B8DCFA"/></svg>
<div class="t" style="left:270px;top:352px;color:#000;letter-spacing:-0.12px;">Масло (4000/0545E Gear Oil HP GX80w90)</div>
<div class="t" style="right:687px;top:352px;color:#C0602A;">0,180000</div>
<div class="t" style="left:554px;top:352px;color:#000;">л</div>
<div class="t" style="left:679px;top:352px;color:#000;">05.2016</div>
<div class="t" style="left:755px;top:352px;color:#333;">---</div>
<div class="t" style="left:834px;top:352px;color:#808080;">Закупочная ...</div>
<div class="t" style="right:276px;top:352px;color:#808080;">50,00</div>
<div class="t" style="right:184px;top:352px;color:#808080;">9,00</div>
<div class="t" style="left:1057px;top:352px;color:#808080;">&lt;не указан&gt;</div>
<div class="a" style="left:19px;top:266px;width:1199px;height:1px;background:#8E8875;"></div>
<div class="a" style="left:19px;top:281px;width:1199px;height:1px;background:#8E8875;"></div>
<div class="a" style="left:19px;top:298px;width:1199px;height:1px;background:#8E8875;"></div>
<div class="a" style="left:19px;top:315px;width:1199px;height:1px;background:#8E8875;"></div>
<div class="a" style="left:19px;top:332px;width:1199px;height:1px;background:#8E8875;"></div>
<div class="a" style="left:19px;top:349px;width:1199px;height:1px;background:#8E8875;"></div>
<div class="a" style="left:19px;top:366px;width:1199px;height:1px;background:#8E8875;"></div>
<div class="a" style="left:19px;top:266px;width:1px;height:100px;background:#8E8875;"></div>
<div class="a" style="left:47px;top:266px;width:1px;height:100px;background:#8E8875;"></div>
<div class="a" style="left:144px;top:266px;width:1px;height:100px;background:#8E8875;"></div>
<div class="a" style="left:247px;top:266px;width:1px;height:100px;background:#8E8875;"></div>
<div class="a" style="left:486px;top:266px;width:1px;height:100px;background:#8E8875;"></div>
<div class="a" style="left:551px;top:266px;width:1px;height:100px;background:#8E8875;"></div>
<div class="a" style="left:601px;top:266px;width:1px;height:100px;background:#8E8875;"></div>
<div class="a" style="left:676px;top:266px;width:1px;height:100px;background:#8E8875;"></div>
<div class="a" style="left:751px;top:266px;width:1px;height:100px;background:#8E8875;"></div>
<div class="a" style="left:831px;top:266px;width:1px;height:100px;background:#8E8875;"></div>
<div class="a" style="left:906px;top:266px;width:1px;height:100px;background:#8E8875;"></div>
<div class="a" style="left:962px;top:266px;width:1px;height:100px;background:#8E8875;"></div>
<div class="a" style="left:1054px;top:266px;width:1px;height:100px;background:#8E8875;"></div>
<div class="a" style="left:1163px;top:266px;width:1px;height:100px;background:#8E8875;"></div>
<div class="a" style="left:1217px;top:266px;width:1px;height:100px;background:#8E8875;"></div>
<svg class="a" style="left:148px;top:282px" width="15" height="17" viewBox="0 0 15 17"><rect x="0.5" y="0.5" width="8" height="8" rx="1.5" fill="#5AAEF0" stroke="#3A86D0"/><path d="M3.2 2.6h1.6v4.6" stroke="#fff" stroke-width="1.3" fill="none"/><rect x="9" y="7" width="5" height="1" fill="#808080"/><path d="M4.5 9.5h8l-4 5z" fill="#A8E0FF" stroke="#1A40E0"/></svg>
<svg class="a" style="left:148px;top:299px" width="15" height="17" viewBox="0 0 15 17"><rect x="0.5" y="0.5" width="8" height="8" rx="1.5" fill="#5AAEF0" stroke="#3A86D0"/><path d="M3.2 2.6h1.6v4.6" stroke="#fff" stroke-width="1.3" fill="none"/><rect x="9" y="7" width="5" height="1" fill="#808080"/><path d="M4.5 9.5h8l-4 5z" fill="#A8E0FF" stroke="#1A40E0"/></svg>
<svg class="a" style="left:148px;top:316px" width="15" height="17" viewBox="0 0 15 17"><rect x="0.5" y="0.5" width="8" height="8" rx="1.5" fill="#5AAEF0" stroke="#3A86D0"/><path d="M3.2 2.6h1.6v4.6" stroke="#fff" stroke-width="1.3" fill="none"/><rect x="9" y="7" width="5" height="1" fill="#808080"/><path d="M4.5 9.5h8l-4 5z" fill="#A8E0FF" stroke="#1A40E0"/></svg>
<svg class="a" style="left:148px;top:333px" width="15" height="17" viewBox="0 0 15 17"><rect x="0.5" y="0.5" width="8" height="8" rx="1.5" fill="#5AAEF0" stroke="#3A86D0"/><path d="M3.2 2.6h1.6v4.6" stroke="#fff" stroke-width="1.3" fill="none"/><rect x="9" y="7" width="5" height="1" fill="#808080"/><path d="M4.5 9.5h8l-4 5z" fill="#A8E0FF" stroke="#1A40E0"/></svg>
<svg class="a" style="left:148px;top:350px" width="15" height="17" viewBox="0 0 15 17"><rect x="0.5" y="0.5" width="8" height="8" rx="1.5" fill="#5AAEF0" stroke="#3A86D0"/><path d="M3.2 2.6h1.6v4.6" stroke="#fff" stroke-width="1.3" fill="none"/><rect x="9" y="7" width="5" height="1" fill="#808080"/><path d="M4.5 9.5h8l-4 5z" fill="#A8E0FF" stroke="#1A40E0"/></svg>
<div class="a" style="left:19px;top:404px;width:1199px;height:15px;background:#ECE6DA;"></div>
<div class="a" style="left:19px;top:404px;width:1199px;height:1px;background:#8E8875;"></div>
<div class="a" style="left:19px;top:404px;width:1px;height:15px;background:#8E8875;"></div>
<div class="a" style="left:47px;top:404px;width:1px;height:15px;background:#8E8875;"></div>
<div class="a" style="left:144px;top:404px;width:1px;height:15px;background:#8E8875;"></div>
<div class="a" style="left:247px;top:404px;width:1px;height:15px;background:#8E8875;"></div>
<div class="a" style="left:486px;top:404px;width:1px;height:15px;background:#8E8875;"></div>
<div class="a" style="left:551px;top:404px;width:1px;height:15px;background:#8E8875;"></div>
<div class="a" style="left:601px;top:404px;width:1px;height:15px;background:#8E8875;"></div>
<div class="a" style="left:676px;top:404px;width:1px;height:15px;background:#8E8875;"></div>
<div class="a" style="left:751px;top:404px;width:1px;height:15px;background:#8E8875;"></div>
<div class="a" style="left:831px;top:404px;width:1px;height:15px;background:#8E8875;"></div>
<div class="a" style="left:906px;top:404px;width:1px;height:15px;background:#8E8875;"></div>
<div class="a" style="left:962px;top:404px;width:1px;height:15px;background:#8E8875;"></div>
<div class="a" style="left:1054px;top:404px;width:1px;height:15px;background:#8E8875;"></div>
<div class="a" style="left:1163px;top:404px;width:1px;height:15px;background:#8E8875;"></div>
<div class="a" style="left:1217px;top:404px;width:1px;height:15px;background:#8E8875;"></div>
<div class="t" style="right:687px;top:406px;color:#000;">0,740000</div>
<div class="a" style="left:20px;top:419px;width:1197px;height:14px;background:#FEFAEF;"></div>
<div class="a" style="left:21px;top:421px;width:11px;height:11px;background:#ECE7DB;border:1px solid #C0BBA8;box-sizing:border-box;"></div>
<svg class="a" style="left:23px;top:423px" width="7" height="7" viewBox="0 0 7 7"><path d="M4.5 0.5L1.5 3.5l3 3" stroke="#000" stroke-width="1.3" fill="none"/></svg>
<div class="a" style="left:33px;top:421px;width:950px;height:11px;background:#E8E2D6;border:1px solid #C0BBA8;box-sizing:border-box;"></div>
<div class="a" style="left:1205px;top:421px;width:11px;height:11px;background:#ECE7DB;border:1px solid #C0BBA8;box-sizing:border-box;"></div>
<svg class="a" style="left:1207px;top:423px" width="7" height="7" viewBox="0 0 7 7"><path d="M2 0.5L5 3.5l-3 3" stroke="#000" stroke-width="1.3" fill="none"/></svg>
<div class="a" style="left:19px;top:433px;width:1199px;height:1px;background:#8E8875;"></div>
<div class="a" style="left:1217px;top:266px;width:1px;height:168px;background:#8E8875;"></div>
<div class="a" style="left:12px;top:449px;width:13px;height:13px;background:#fff;border:1px solid #85806E;box-sizing:border-box;"></div>
<div class="t" style="left:29px;top:450px;color:#000;">Отображать количество в свободном остатке и недообеспечение</div>
<div class="t" style="left:1012px;top:449px;color:#000;font-weight:bold;font-size:12px;letter-spacing:0.3px;">Всего по заказу:</div>
<div class="t" style="right:12px;top:449px;color:#000;font-weight:bold;font-size:12px;letter-spacing:0.45px;">5 235,12 грн.</div>
<div class="t" style="left:12px;top:472px;color:#000;">Комментарий:</div>
<div class="a" style="left:94px;top:468px;width:1131px;height:19px;background:#fff;border:1px solid #85806E;box-sizing:border-box;"></div>
<div class="t" style="left:97px;top:472px;color:#000;">долив,замена</div>
<div class="t" style="left:933px;top:501px;color:#000;">Внутренний заказ</div>
<div class="a" style="left:1033px;top:498px;width:1px;height:17px;background:#CAC5B5;"></div>
<div class="t" style="left:1039px;top:501px;color:#000;">Печать</div>
<div class="a" style="left:1083px;top:498px;width:1px;height:17px;background:#CAC5B5;"></div>
<div class="t" style="left:1090px;top:502px;color:#000;font-weight:bold;font-size:12px;">OK</div>
<div class="a" style="left:1114px;top:498px;width:1px;height:17px;background:#CAC5B5;"></div>
<div class="t" style="left:1121px;top:501px;color:#000;">Записать</div>
<div class="a" style="left:1176px;top:498px;width:1px;height:17px;background:#CAC5B5;"></div>
<div class="t" style="left:1183px;top:501px;color:#000;">Закрыть</div>
</body></html>
